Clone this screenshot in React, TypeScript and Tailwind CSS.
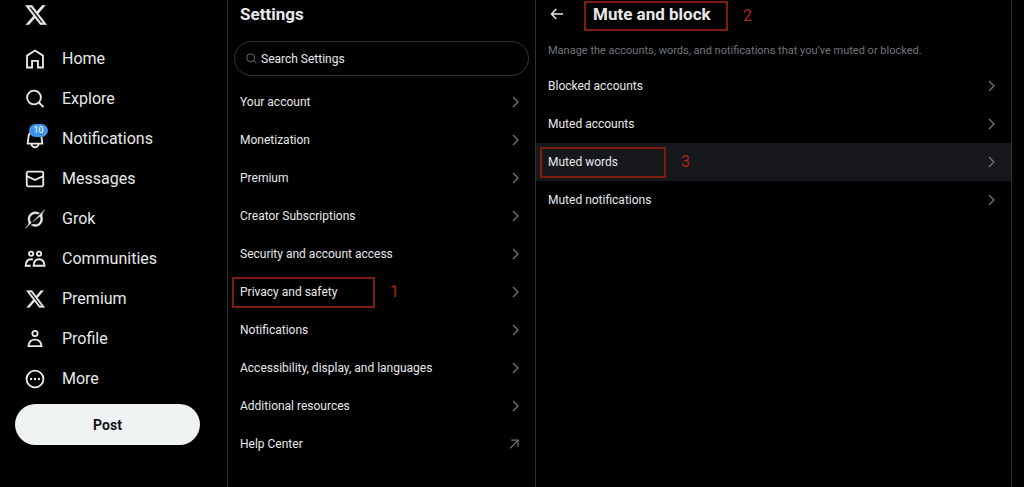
import type { ReactNode } from "react";

type NavItem = {
  label: string;
  icon: ReactNode;
  badge?: number;
};

type SettingItem = {
  label: string;
  external?: boolean;
  active?: boolean;
  step?: number;
};

const stroked = {
  viewBox: "0 0 24 24",
  fill: "none",
  stroke: "currentColor",
  strokeWidth: 2,
  className: "w-[22px] h-[22px]",
};

const filled = {
  viewBox: "0 0 24 24",
  fill: "currentColor",
  className: "w-[22px] h-[22px]",
};

const XLogo = ({ className }: { className: string }) => (
  <svg
    viewBox="1 2 22 20"
    fill="currentColor"
    stroke="currentColor"
    strokeWidth="0.3"
    className={className}
  >
    <path d="M18.244 2.25h3.308l-7.227 8.26 8.502 11.24H16.17l-5.214-6.817L4.99 21.75H1.68l7.73-8.835L1.254 2.25H8.08l4.713 6.231zm-1.161 17.52h1.833L7.084 4.126H5.117z" />
  </svg>
);

const navItems: NavItem[] = [
  {
    label: "Home",
    icon: (
      <svg {...stroked}>
        <path d="M3.3 21.3V8.3L12 2.7l8.7 5.6v13h-5.5v-7.2H8.8v7.2z" />
      </svg>
    ),
  },
  {
    label: "Explore",
    icon: (
      <svg {...stroked}>
        <circle cx="10.9" cy="10.4" r="7.5" />
        <path d="M16.2 15.8l5.1 5.1" />
      </svg>
    ),
  },
  {
    label: "Notifications",
    badge: 10,
    icon: (
      <svg {...filled}>
        <path d="M19.993 9.042C19.48 5.017 16.054 2 11.996 2s-7.49 3.021-7.999 7.051L2.866 18H7.1c.463 2.282 2.481 4 4.9 4s4.437-1.718 4.9-4h4.236l-1.143-8.958zM12 20c-1.306 0-2.417-.835-2.829-2h5.658c-.412 1.165-1.523 2-2.829 2zm-6.866-4l.847-6.698C6.364 6.272 8.941 4 11.996 4s5.627 2.268 6.013 5.295L18.864 16H5.134z" />
      </svg>
    ),
  },
  {
    label: "Messages",
    icon: (
      <svg {...filled}>
        <path d="M1.998 5.5c0-1.381 1.119-2.5 2.5-2.5h15c1.381 0 2.5 1.119 2.5 2.5v13c0 1.381-1.119 2.5-2.5 2.5h-15c-1.381 0-2.5-1.119-2.5-2.5v-13zm2.5-.5c-.276 0-.5.224-.5.5v2.764l8 3.638 8-3.636V5.5c0-.276-.224-.5-.5-.5h-15zm15.5 5.463l-8 3.636-8-3.638V18.5c0 .276.224.5.5.5h15c.276 0 .5-.224.5-.5v-8.037z" />
      </svg>
    ),
  },
  {
    label: "Grok",
    icon: (
      <svg
        viewBox="0 0 34 33"
        fill="currentColor"
        stroke="currentColor"
        strokeWidth="0.7"
        className="w-5 h-5"
      >
        <path d="M13.237 21.04l11.082-8.19c.543-.4 1.32-.244 1.578.38 1.363 3.288.754 7.241-1.957 9.955-2.71 2.714-6.482 3.31-9.93 1.954l-3.765 1.745c5.401 3.697 11.96 2.782 16.059-1.324 3.251-3.255 4.258-7.692 3.317-11.693l.008.009c-1.365-5.878.336-8.227 3.82-13.031.083-.114.165-.228.247-.345L29.111 5.09v-.014L13.234 21.044" />
        <path d="M10.95 23.031c-3.877-3.707-3.208-9.446.1-12.755 2.446-2.449 6.454-3.448 9.952-1.979l3.758-1.737c-.677-.49-1.545-1.017-2.54-1.387-4.5-1.854-9.888-.931-13.545 2.728-3.519 3.523-4.625 8.94-2.725 13.561 1.419 3.455-.907 5.898-3.251 8.364-.83.874-1.664 1.749-2.335 2.674l10.583-9.466" />
      </svg>
    ),
  },
  {
    label: "Communities",
    icon: (
      <svg {...stroked}>
        <circle cx="7.8" cy="6.2" r="2.3" />
        <circle cx="16.4" cy="6.2" r="2.3" />
        <path d="M10.4 19.4c.3-4.6 2.4-7.1 6-7.1s5.7 2.5 6 7.1z" />
        <path d="M7.4 19.4H1.8c.2-4.4 2.2-7.1 5.9-7.1.9 0 1.5.1 2.1.4" />
      </svg>
    ),
  },
  { label: "Premium", icon: <XLogo className="w-[19px] h-[18px]" /> },
  {
    label: "Profile",
    icon: (
      <svg {...stroked}>
        <circle cx="12" cy="6" r="2.9" />
        <path d="M4.9 19.7c.4-4.4 3.1-7 7.1-7s6.7 2.6 7.1 7z" />
      </svg>
    ),
  },
  {
    label: "More",
    icon: (
      <svg {...stroked}>
        <circle cx="12" cy="12" r="9.2" />
        <g fill="currentColor" stroke="none">
          <circle cx="7.7" cy="12" r="1.3" />
          <circle cx="12" cy="12" r="1.3" />
          <circle cx="16.3" cy="12" r="1.3" />
        </g>
      </svg>
    ),
  },
];

const settings: SettingItem[] = [
  { label: "Your account" },
  { label: "Monetization" },
  { label: "Premium" },
  { label: "Creator Subscriptions" },
  { label: "Security and account access" },
  { label: "Privacy and safety", step: 1 },
  { label: "Notifications" },
  { label: "Accessibility, display, and languages" },
  { label: "Additional resources" },
  { label: "Help Center", external: true },
];

const muteSettings: SettingItem[] = [
  { label: "Blocked accounts" },
  { label: "Muted accounts" },
  { label: "Muted words", active: true, step: 3 },
  { label: "Muted notifications" },
];

// Red frame plus its step number, drawn over the item it points at
const StepMark = ({ step, className }: { step: number; className: string }) => (
  <div className={`absolute pointer-events-none ${className}`}>
    <div className="w-full h-full border-2 border-[#7d1d10]" />
    <span className="absolute top-[5px] left-full ml-[15px] font-normal text-base leading-5 text-[#a82614]">
      {step}
    </span>
  </div>
);

const SettingRow = ({ item, mark }: { item: SettingItem; mark: string }) => (
  <li className="relative">
    <a
      href="#"
      className={`flex items-center justify-between h-[38px] pl-3 pr-4 text-xs ${
        item.active ? "bg-[#16181c]" : ""
      }`}
    >
      {item.label}
      {item.external ? (
        <svg
          viewBox="0 0 10 10"
          fill="none"
          stroke="currentColor"
          strokeWidth="1.2"
          className="w-[10px] h-[10px] text-[#71767b]"
        >
          <path d="M1 9.3l8-8M2.3 1.2H9V8" />
        </svg>
      ) : (
        <svg
          viewBox="0 0 7 12"
          fill="none"
          stroke="currentColor"
          strokeWidth="1.3"
          className="w-[7px] h-3 text-[#71767b]"
        >
          <path d="M1 1l5 5-5 5" />
        </svg>
      )}
    </a>
    {item.step && <StepMark step={item.step} className={mark} />}
  </li>
);

export default function App() {
  return (
    <div className="flex min-h-screen pr-3 bg-black text-[#e7e9ea] font-[Roboto,sans-serif]">
      <header className="w-[228px] shrink-0 border-r border-[#2f3336]">
        <a
          href="#"
          aria-label="X"
          className="flex items-center h-[39px] pl-[25px] pb-[9px]"
        >
          <XLogo className="w-[22px] h-5" />
        </a>
        <nav>
          {navItems.map(({ label, icon, badge }) => (
            <a
              key={label}
              href="#"
              className="flex items-center h-10 pl-6 gap-4 text-base"
            >
              <span className="relative flex items-center justify-center w-[22px] h-[22px]">
                {icon}
                {badge && (
                  <span className="absolute -top-1 left-[5px] flex items-center justify-center w-[19px] h-[13px] rounded-full bg-[#3f94e9] text-[9px] text-white">
                    {badge}
                  </span>
                )}
              </span>
              {label}
            </a>
          ))}
        </nav>
        <button
          type="button"
          className="block w-[185px] h-[41px] mt-[5px] ml-[15px] rounded-full bg-[#eff3f4] text-[#0f1419] text-sm font-bold"
        >
          Post
        </button>
      </header>

      <section className="w-[308px] shrink-0 border-r border-[#2f3336]">
        <h2 className="h-[41px] pl-3 pt-1 text-[17px] leading-5 font-bold">
          Settings
        </h2>
        <label className="flex items-center gap-1 h-[35px] mx-[6px] mb-[7px] pl-[11px] border border-[#2f3336] rounded-full">
          <svg
            viewBox="0 0 12 12"
            fill="none"
            stroke="currentColor"
            className="w-[11px] h-[11px] text-[#71767b]"
          >
            <circle cx="5.2" cy="5.2" r="4.3" />
            <path d="M8.3 8.3l3 3" />
          </svg>
          <input
            type="text"
            aria-label="Search Settings"
            placeholder="Search Settings"
            className="flex-1 min-w-0 bg-transparent outline-none text-xs placeholder:text-[#e7e9ea]"
          />
        </label>
        <ul>
          {settings.map((item) => (
            <SettingRow
              key={item.label}
              item={item}
              mark="top-1 left-1 w-[143px] h-[31px]"
            />
          ))}
        </ul>
      </section>

      <main className="flex-1 min-w-0 border-r border-[#2f3336]">
        <div className="flex items-start h-[41px] pl-[14px] pt-1">
          <button type="button" aria-label="Back" className="w-[43px] h-5">
            <svg
              viewBox="0 0 14 12"
              fill="none"
              stroke="currentColor"
              strokeWidth="1.5"
              className="w-[14px] h-3"
            >
              <path d="M6.3 1L1.5 6l4.8 5M1.5 6H13" />
            </svg>
          </button>
          <h2 className="relative text-[17px] leading-5 font-bold">
            Mute and block
            <StepMark
              step={2}
              className="-top-[3px] -left-[9px] w-[144px] h-[30px]"
            />
          </h2>
        </div>
        <p className="h-[26px] pl-3 text-[11px] leading-5 text-[#71767b]">
          Manage the accounts, words, and notifications that you’ve muted or
          blocked.
        </p>
        <ul>
          {muteSettings.map((item) => (
            <SettingRow
              key={item.label}
              item={item}
              mark="top-1 left-1 w-[126px] h-[31px]"
            />
          ))}
        </ul>
      </main>
    </div>
  );
}
